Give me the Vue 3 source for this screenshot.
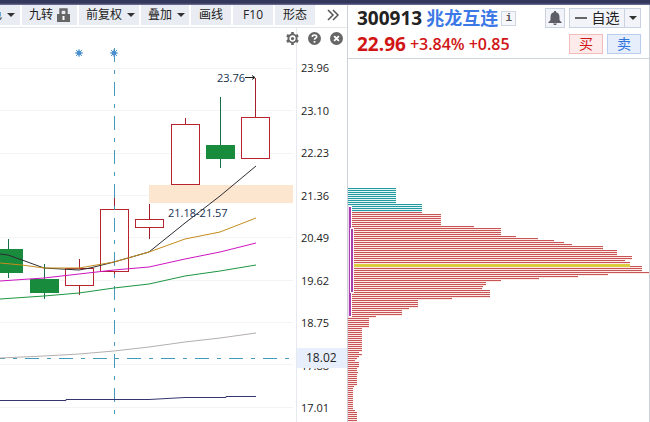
<template>
  <div class="terminal">
    <div class="title-strip"></div>

    <section class="chart-panel">
      <nav class="toolbar">
        <button v-for="t in tools" :key="t.label" class="tool" :class="t.kind">
          <span>{{ t.label }}</span>
          <svg v-if="t.kind === 'locked'" class="lock" width="13" height="14" viewBox="0 0 13 14">
            <path d="M3.5 7V1.5H9.5V7" fill="none" stroke="#666" stroke-width="2.4" />
            <rect x="0" y="6" width="13" height="8" fill="#666" />
            <path d="M6.5 8V12" stroke="#fff" stroke-width="2" />
          </svg>
          <i v-if="t.kind === 'menu' || t.kind === 'cut'" class="caret"></i>
        </button>
        <button class="more" aria-label="更多">
          <svg width="12" height="12" viewBox="0 0 12 12">
            <path d="M1 1L6 6L1 11M6 1L11 6L6 11" fill="none" stroke="#555" stroke-width="1.5" />
          </svg>
        </button>
      </nav>

      <div class="chart-body">
        <svg class="kline" viewBox="0 28 296 394">
          <g stroke="#f2f4f5" shape-rendering="crispEdges">
            <line v-for="y in gridY" :key="y" x1="0" x2="293" :y1="y" :y2="y" />
          </g>
          <rect x="149" y="185" width="144" height="18" fill="#fde6d0" />

          <!-- Candles -->
          <g v-for="c in candles" :key="c.x" shape-rendering="crispEdges">
            <rect :x="c.x" :y="c.high" width="1" :height="c.low - c.high" :fill="c.up ? '#a3202a' : '#17704a'" />
            <rect v-if="c.up" :x="c.x - 13.5" :y="c.top + 0.5" width="28" :height="c.bottom - c.top - 1" fill="#fff" stroke="#b8242e" />
            <rect v-else :x="c.x - 14" :y="c.top" width="29" :height="c.bottom - c.top" fill="#188b3c" />
          </g>

          <!-- Crosshair -->
          <g stroke="#459abc" stroke-dasharray="14 8 4 8" shape-rendering="crispEdges">
            <path d="M114.5 48V414" />
            <path d="M-9 358.5H290" />
          </g>

          <polyline v-for="m in averages" :key="m.color" :points="m.points" fill="none" :stroke="m.color" />

          <!-- Markers above the bars -->
          <g v-for="x in [79, 114]" :key="x" stroke="#5b9bd0">
            <path :d="`M${x - 4} 53H${x + 4}M${x} 49V57M${x - 3} 50L${x + 3} 56M${x + 3} 50L${x - 3} 56`" />
            <circle :cx="x" cy="53" r="2.5" fill="#4a90d0" stroke="none" />
          </g>

          <path d="M245 77.5H254M252 75.5L255 77.5L252 79.5" fill="none" stroke="#222" />
          <text x="217" y="82">23.76</text>
          <text x="168" y="217">21.18-21.57</text>
        </svg>

        <div class="axis">
          <span v-for="p in prices" :key="p">{{ p }}</span>
          <b class="cursor-price">18.02</b>
        </div>

        <div class="chart-icons">
          <button aria-label="设置">
            <svg width="13" height="13" viewBox="0 0 12 12">
              <path d="M6 0V12M.8 3L11.2 9M11.2 3L.8 9" stroke="#666" stroke-width="2.4" />
              <circle cx="6" cy="6" r="3.8" fill="#fff" stroke="#666" stroke-width="1.8" />
              <circle cx="6" cy="6" r="1.5" fill="#666" />
            </svg>
          </button>
          <button aria-label="帮助">
            <svg width="13" height="13" viewBox="0 0 12 12">
              <circle cx="6" cy="6" r="6" fill="#666" />
              <path d="M4 4.5Q4 2.8 6 2.8T8 4.4Q8 5.3 6.8 5.8Q6 6.2 6 7.2" fill="none" stroke="#fff" stroke-width="1.5" />
              <rect x="5.2" y="8.3" width="1.6" height="1.6" fill="#fff" />
            </svg>
          </button>
          <button aria-label="关闭">
            <svg width="13" height="13" viewBox="0 0 12 12">
              <circle cx="6" cy="6" r="6" fill="#666" />
              <path d="M3.8 3.8L8.2 8.2M8.2 3.8L3.8 8.2" stroke="#fff" stroke-width="1.8" />
            </svg>
          </button>
        </div>
      </div>
    </section>

    <section class="quote-panel">
      <header class="quote">
        <div class="row">
          <strong class="code">300913</strong>
          <strong class="name">兆龙互连</strong>
          <button class="info" aria-label="信息">i</button>
          <div class="actions">
            <button class="box bell" aria-label="提醒">
              <svg width="14" height="14" viewBox="0 0 14 14" fill="#5c5f66">
                <path d="M6 0H8V1.3Q11.5 2 11.5 6V9L14 12H0L2.5 9V6Q2.5 2 6 1.3Z" />
                <path d="M5 12.5H9L8 14H6Z" />
              </svg>
            </button>
            <div class="watch">
              <button class="box watch-main"><i class="minus"></i>自选</button>
              <button class="box watch-menu" aria-label="自选菜单"><i class="caret"></i></button>
            </div>
          </div>
        </div>
        <div class="row">
          <strong class="price">22.96</strong>
          <span class="change">+3.84%</span>
          <span class="change">+0.85</span>
          <div class="actions">
            <button class="box buy">买</button>
            <button class="box sell">卖</button>
          </div>
        </div>
      </header>

      <svg class="chips" viewBox="0 59 301 363" shape-rendering="crispEdges">
        <g v-for="b in bars" :key="b.y">
          <rect x="0" :y="b.y" :width="b.w" height="2" :fill="b.pale" />
          <rect x="0" :y="b.y" :width="b.w" height="1" :fill="b.color" />
        </g>
        <rect x="0" y="264" width="282" height="3" fill="#dbcf3f" />
        <rect x="0" y="206" width="4" height="111" fill="#fff" />
        <rect x="0" y="206" width="1" height="111" fill="#f3d9f5" />
        <rect x="1" y="207" width="2" height="109" fill="#a83fae" />
        <rect x="2" y="228" width="4" height="65" fill="#fff" />
        <rect x="3" y="229" width="2" height="63" fill="#a83fae" />
      </svg>
    </section>
  </div>
</template>

<script setup>
const tools = [
  { label: '色', kind: 'cut' },
  { label: '九转', kind: 'locked' },
  { label: '前复权', kind: 'menu' },
  { label: '叠加', kind: 'menu' },
  { label: '画线', kind: 'plain' },
  { label: 'F10', kind: 'plain' },
  { label: '形态', kind: 'plain' },
]

const prices = ['23.96', '23.10', '22.23', '21.36', '20.49', '19.62', '18.75', '17.88', '17.01']
const gridY = [68.5, 110.5, 153.5, 195.5, 237.5, 280.5, 322.5, 364.5, 407.5]

const candles = [
  { x: 8, high: 239, top: 249, bottom: 273, low: 278, up: false },
  { x: 44, high: 264, top: 279, bottom: 293, low: 299, up: false },
  { x: 79, high: 259, top: 268, bottom: 286, low: 295, up: true },
  { x: 114, high: 198, top: 209, bottom: 272, low: 278, up: true },
  { x: 149, high: 204, top: 219, bottom: 228, low: 239, up: true },
  { x: 185, high: 118, top: 124, bottom: 185, low: 185, up: true },
  { x: 220, high: 97, top: 145, bottom: 159, low: 168, up: false },
  { x: 255, high: 78, top: 117, bottom: 159, low: 159, up: true },
]

const averages = [
  { color: '#2b2b33', points: '0,254 8,255 22,260 44,268 79,270 90,268 114,262 149,252 185,223 220,196 256,166' },
  { color: '#c48c1c', points: '0,263 22,265 44,268 79,268 114,262 149,252 185,239 220,232 256,218' },
  { color: '#cc14c0', points: '0,281 44,278 79,274 114,270 149,267 185,259 220,252 256,243' },
  { color: '#1c9642', points: '0,299 44,296 79,293 114,288 149,284 185,276 220,271 256,265' },
  { color: '#b5afaf', points: '0,358 44,356 79,354 114,351 149,347 185,342 220,338 256,333' },
  { color: '#35356f', points: '0,400.5 66,400.5 66,399.5 149,399.5 185,397.5 226,397.5 226,396.5 256,396.5' },
]

// [number of price levels, bar width], from the top level down
const runs = [
  [8, 48], [5, 74], [6, 93], [1, 126], [4, 153], [1, 168], [1, 190], [1, 206],
  [1, 216], [1, 224], [2, 255], [3, 269], [2, 284], [1, 277], [1, 282], [1, 282],
  [3, 294], [1, 301], [1, 260], [1, 230], [1, 191], [1, 153], [2, 138], [1, 135],
  [1, 134], [4, 142], [1, 104], [4, 70], [1, 61], [3, 54], [1, 28], [5, 21],
  [12, 14], [1, 11], [1, 14], [1, 11], [1, 9], [1, 7], [3, 11], [2, 9], [1, 10],
  [6, 9], [1, 6], [11, 5], [1, 7], [5, 9],
]
const bars = runs
  .flatMap(([count, w]) => Array(count).fill(w))
  .map((w, i) => ({
    y: 188 + i * 2,
    w,
    color: i < 12 ? '#2499a0' : '#c65458',
    pale: i < 12 ? '#e4f6f5' : '#fdebe4',
  }))
</script>

<style>
body { margin: 0; background: #fff; }
</style>

<style scoped>
.terminal {
  display: grid; grid-template-columns: minmax(0, 1fr) 303px;
  font-family: "Open Sans", "Noto Sans CJK SC", sans-serif;
  font-size: 12px; color: #222;
  overflow: hidden;
}
.title-strip {
  grid-column: 1 / -1; height: 5px;
  background: linear-gradient(#34375c 60%, #73769a);
}
button {
  font: inherit; color: inherit; padding: 0; margin: 0;
  border: none; background: none; cursor: pointer; box-sizing: border-box;
  display: flex; align-items: center; justify-content: center; flex-shrink: 0;
}
svg { display: block; }

/* Toolbar */
.toolbar {
  display: flex; gap: 2px; height: 22px; align-items: flex-start;
  border-bottom: 1px solid #e4e7ea;
}
.tool { height: 20px; background: #e9ecf3; line-height: 20px; white-space: nowrap; }
.tool.cut { width: 20px; gap: 5px; padding-right: 5px; justify-content: flex-end; overflow: hidden; }
.tool.locked { padding: 0 7px; gap: 4px; }
.tool.menu { padding: 0 4px 0 7px; gap: 5px; }
.tool.plain { width: 40px; }
.caret {
  width: 0; height: 0; flex-shrink: 0;
  border: 4px solid transparent; border-top: 4px solid #333; border-bottom: none;
}
.more { width: 32px; height: 20px; }

/* Chart */
.chart-body { position: relative; display: grid; grid-template-columns: minmax(0, 1fr) 51px; }
.kline { width: 100%; }
.kline text { font-size: 11px; fill: #17304f; }
.axis {
  position: relative; box-sizing: border-box;
  display: flex; flex-direction: column; justify-content: space-between;
  padding: 32px 0 6px 4px; border-left: 1px solid #e6eaee;
  font-size: 11px; line-height: 16px;
}
.cursor-price {
  position: absolute; left: 0; right: 0; top: 320px;
  height: 20px; line-height: 20px; padding-left: 9px;
  background: #e8effc; font-size: 12px; font-weight: 400;
}
.chart-icons { position: absolute; top: 4px; right: 4px; display: flex; gap: 9px; }

/* Quote */
.quote-panel { border-left: 1px solid #cdd2da; border-right: 1px solid #cdd2da; }
.quote {
  display: flex; flex-direction: column; gap: 6px;
  padding: 3px 8px 4px 9px; border-bottom: 1px solid #cdd6de;
}
.row { display: flex; align-items: center; height: 20px; white-space: nowrap; }
.code { font-size: 19px; line-height: 20px; }
.name { font-size: 18px; line-height: 20px; margin-left: 4px; color: #3c78e6; }
.info {
  width: 15px; height: 15px; margin-left: 3px;
  border: 1px solid #cfd6e2; background: #f5f7fb; color: #555;
  font: bold 11px "Liberation Mono", monospace;
}
.price { font-size: 19px; line-height: 20px; color: #d11515; }
.change { font-size: 16px; line-height: 20px; font-weight: 600; margin-left: 4px; color: #d11515; }
.actions { display: flex; gap: 4px; margin-left: auto; }
.box { height: 20px; border: 1px solid #c9d2e0; background: #f2f4f9; line-height: 18px; }
.bell { width: 20px; }
.watch { display: flex; }
.watch-main { width: 56px; gap: 5px; font-size: 14px; }
.watch-menu { width: 17px; margin-left: -1px; }
.minus { width: 12px; height: 2px; background: #666; }
.buy, .sell { width: 34px; font-size: 14px; }
.buy { color: #d11515; background: #fdeaea; border-color: #f0bcbc; }
.sell { color: #2f74dd; background: #e6eefc; border-color: #b9cdf0; }
.chips { width: 100%; }
</style>
